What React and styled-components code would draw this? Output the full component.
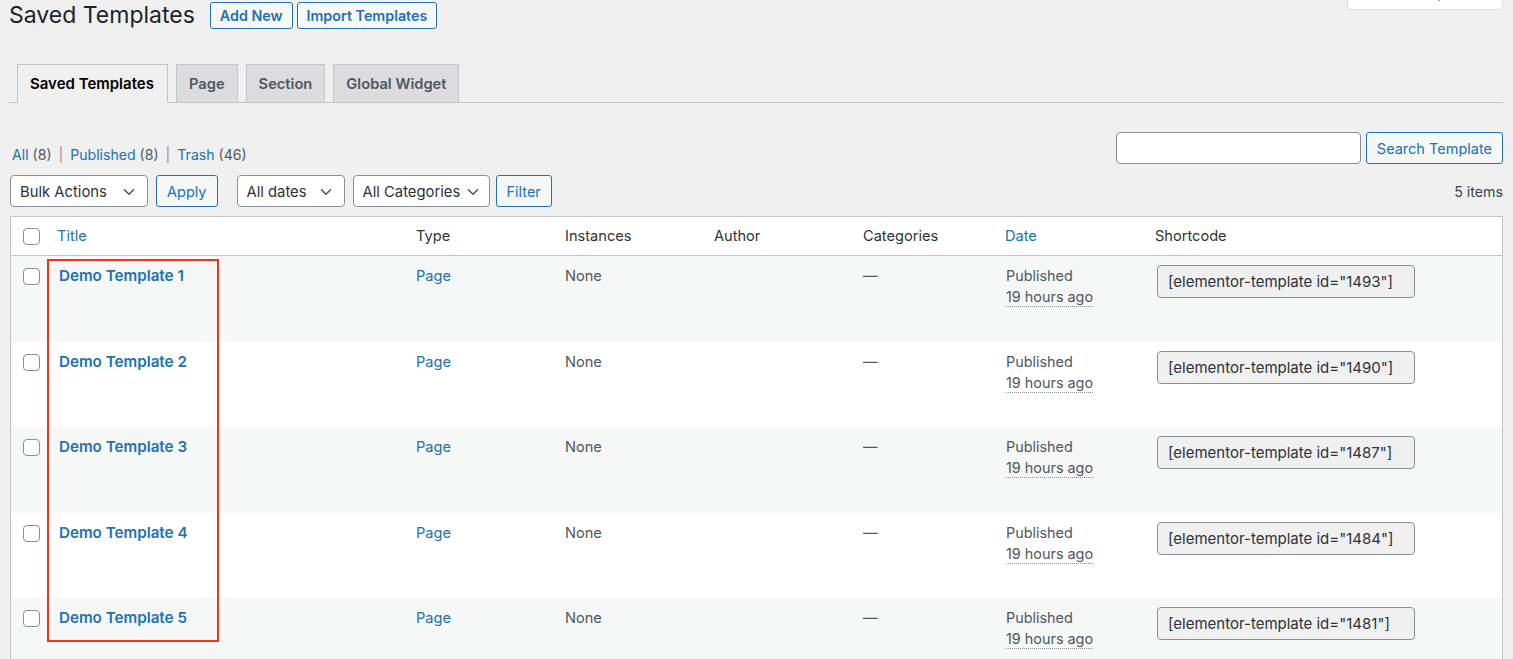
import React from "react";
import styled, { createGlobalStyle } from "styled-components";

const Global = createGlobalStyle`
  html, body { margin: 0; padding: 0; background: #f0f0f1; }
  body { font-family: Inter, "Liberation Sans", Arial, sans-serif; color: #3c434a; font-size: 14.5px; }
  * { box-sizing: border-box; }
`;

const Wrap = styled.div`
  padding: 0 10px 0 9px;
  width: 1513px;
  height: 659px;
  overflow: hidden;
`;

const TopBar = styled.div`
  display: flex;
  align-items: flex-start;
  height: 29px;
`;

const Heading = styled.h1`
  margin: 2px 0 0 0;
  font-size: 23px;
  font-weight: 400;
  line-height: 27px;
  color: #1d2327;
`;

const HeadButtons = styled.div`
  display: flex;
  gap: 4px;
  margin: 2px 0 0 15px;
`;

const PageButton = styled.button`
  height: 27px;
  padding: 0 9px;
  border: 1px solid #2271b1;
  border-radius: 3px;
  background: #f6f7f7;
  color: #2271b1;
  font-family: inherit;
  font-size: 14.3px;
  font-weight: 600;
  cursor: pointer;
`;

const ScreenMeta = styled.div`
  margin-left: auto;
  margin-top: -2px;
  width: 156px;
  height: 12px;
  overflow: hidden;
  background: #fff;
  border: 1px solid #dcdcde;
  border-top: none;
  border-radius: 0 0 4px 4px;
  display: flex;
  justify-content: center;
  align-items: flex-end;
`;

const ScreenMetaText = styled.span`
  font-size: 14px;
  line-height: 14px;
  color: #3c434a;
  transform: translateY(-9px);
  padding-left: 4px;
`;

const Tabs = styled.div`
  display: flex;
  gap: 8px;
  margin-top: 35px;
  padding-left: 8px;
  border-bottom: 1px solid #c3c4c7;
  height: 39px;
`;

const Tab = styled.div`
  height: 39px;
  padding: 0 ${(p) => (p.$active ? "13px" : "12px")} 0 12px;
  display: flex;
  align-items: center;
  border: 1px solid #c3c4c7;
  border-bottom-color: ${(p) => (p.$active ? "#f0f0f1" : "#c3c4c7")};
  background: ${(p) => (p.$active ? "#f0f0f1" : "#dcdcde")};
  color: ${(p) => (p.$active ? "#000" : "#50575e")};
  font-size: ${(p) => (p.$active ? "15px" : "14.7px")};
  font-weight: 600;
  margin-bottom: -1px;
`;

const FilterTop = styled.div`
  display: flex;
  align-items: flex-end;
  justify-content: space-between;
  margin-top: 29px;
`;

const Views = styled.div`
  display: flex;
  align-items: center;
  line-height: 18px;
  padding-left: 3px;
  color: #50575e;
  font-size: 14.1px;
`;

const ViewLink = styled.a`
  color: #2271b1;
  text-decoration: none;
`;

const Sep = styled.span`
  color: #8c8f94;
  margin: 0 7px;
`;

const SearchBox = styled.div`
  display: flex;
  gap: 5px;
`;

const SearchInput = styled.input`
  width: 245px;
  height: 32px;
  border: 1px solid #8c8f94;
  border-radius: 4px;
  background: #fff;
  font-family: inherit;
`;

const ButtonSm = styled.button`
  height: 32px;
  padding: 0 ${(p) => p.$px || 11}px;
  border: 1px solid #2271b1;
  border-radius: 3px;
  background: #f6f7f7;
  color: #2271b1;
  font-family: inherit;
  font-size: 14.5px;
  font-weight: 400;
  cursor: pointer;
`;

const NavRow = styled.div`
  display: flex;
  align-items: center;
  margin-top: 11px;
  padding-left: 1px;
`;

const Group = styled.div`
  display: flex;
  align-items: center;
  gap: ${(p) => p.$gap || 8}px;
  margin-right: ${(p) => p.$mr || 0}px;
`;

const SelectBox = styled.div`
  width: ${(p) => p.$w}px;
  height: 32px;
  border: 1px solid #8c8f94;
  border-radius: 4px;
  background: #fff;
  display: flex;
  align-items: center;
  justify-content: space-between;
  padding: 1px ${(p) => p.$pr || 12}px 0 9px;
  color: #2c3338;
  font-size: 14.8px;
  white-space: nowrap;
`;

const Count = styled.div`
  margin-left: auto;
  color: #3c434a;
  font-size: 14.2px;
`;

const TableWrap = styled.div`
  position: relative;
  margin-top: 9px;
  margin-left: 1px;
  border: 1px solid #c3c4c7;
  background: #fff;
`;

const Row = styled.div`
  display: grid;
  grid-template-columns: 36px 359px 149px 149px 149px 142px 150px 1fr;
  height: ${(p) => (p.$head ? "39px" : "85.5px")};
  background: ${(p) => (p.$head ? "#fff" : p.$alt ? "#f6f7f7" : "#fff")};
  border-bottom: ${(p) => (p.$head ? "1px solid #c3c4c7" : "none")};
  align-items: ${(p) => (p.$head ? "center" : "start")};
`;

const Cell = styled.div`
  padding: ${(p) => (p.$head ? "0" : "10px")} 10px 0 ${(p) => (p.$bold ? 12 : 10)}px;
  color: ${(p) => (p.$link ? "#2271b1" : p.$head ? "#2c3338" : "#50575e")};
  font-size: ${(p) => (p.$bold ? "15.2px" : "14.6px")};
  line-height: 20px;
  font-weight: ${(p) => (p.$bold ? 600 : 400)};
`;

const DateCell = styled.div`
  padding: 9px 10px 0 11px;
  color: #50575e;
  font-size: 14.4px;
  line-height: 21px;
`;

const Abbr = styled.span`
  display: inline-block;
  border-bottom: 1px dotted #8c8f94;
  line-height: 18px;
`;

const CheckCell = styled.div`
  padding: ${(p) => (p.$head ? "0" : "12px")} 0 0 12px;
  display: flex;
`;

const Check = styled.span`
  display: inline-block;
  width: 17px;
  height: 17px;
  border: 1px solid #8c8f94;
  border-radius: 4px;
  background: #fff;
`;

const ShortcodeCell = styled.div`
  padding: 9px 0 0 12px;
`;

const Shortcode = styled.div`
  width: 258px;
  height: 33px;
  border: 1px solid #8c8f94;
  border-radius: 4px;
  background: #f0f0f1;
  color: #2c3338;
  font-size: 15px;
  display: flex;
  align-items: center;
  padding-left: 10px;
  white-space: nowrap;
`;

const Highlight = styled.div`
  position: absolute;
  left: 36px;
  top: 42px;
  width: 172px;
  height: 383px;
  border: 2px solid #f0341c;
  pointer-events: none;
`;

const Chevron = () => (
  <svg width="12" height="8" viewBox="0 0 12 8" aria-hidden="true">
    <path d="M1.5 1.8 L6 6.2 L10.5 1.8" fill="none" stroke="#50575e" strokeWidth="1.6" strokeLinecap="round" strokeLinejoin="round" />
  </svg>
);

const rows = [
  { n: 1, id: "1493" },
  { n: 2, id: "1490" },
  { n: 3, id: "1487" },
  { n: 4, id: "1484" },
  { n: 5, id: "1481" },
];

export default function App() {
  return (
    <>
      <Global />
      <Wrap>
        <TopBar>
          <Heading>Saved Templates</Heading>
          <HeadButtons>
            <PageButton>Add New</PageButton>
            <PageButton>Import Templates</PageButton>
          </HeadButtons>
          <ScreenMeta>
            <ScreenMetaText>Screen Options</ScreenMetaText>
          </ScreenMeta>
        </TopBar>

        <Tabs>
          <Tab $active>Saved Templates</Tab>
          <Tab>Page</Tab>
          <Tab>Section</Tab>
          <Tab>Global Widget</Tab>
        </Tabs>

        <FilterTop>
          <Views>
            <ViewLink>All</ViewLink>&nbsp;(8)
            <Sep>|</Sep>
            <ViewLink>Published</ViewLink>&nbsp;(8)
            <Sep>|</Sep>
            <ViewLink>Trash</ViewLink>&nbsp;(46)
          </Views>
          <SearchBox>
            <SearchInput />
            <ButtonSm $px={10}>Search Template</ButtonSm>
          </SearchBox>
        </FilterTop>

        <NavRow>
          <Group $mr={19}>
            <SelectBox $w={138}>
              Bulk Actions <Chevron />
            </SelectBox>
            <ButtonSm $px={10}>Apply</ButtonSm>
          </Group>
          <Group $gap={8}>
            <SelectBox $w={108}>
              All dates <Chevron />
            </SelectBox>
            <SelectBox $w={137} $pr={10}>
              All Categories <Chevron />
            </SelectBox>
          </Group>
          <Group $gap={6}>
            <span />
            <ButtonSm $px={10}>Filter</ButtonSm>
          </Group>
          <Count>5 items</Count>
        </NavRow>

        <TableWrap>
          <Row $head>
            <CheckCell $head>
              <Check />
            </CheckCell>
            <Cell $head $link>Title</Cell>
            <Cell $head>Type</Cell>
            <Cell $head>Instances</Cell>
            <Cell $head>Author</Cell>
            <Cell $head>Categories</Cell>
            <Cell $head $link>Date</Cell>
            <Cell $head>Shortcode</Cell>
          </Row>
          {rows.map((r, i) => (
            <Row key={r.n} $alt={i % 2 === 0}>
              <CheckCell>
                <Check />
              </CheckCell>
              <Cell $link $bold>
                Demo Template {r.n}
              </Cell>
              <Cell $link>Page</Cell>
              <Cell>None</Cell>
              <Cell />
              <Cell>—</Cell>
              <DateCell>
                Published
                <br />
                <Abbr>19 hours ago</Abbr>
              </DateCell>
              <ShortcodeCell>
                <Shortcode>[elementor-template id="{r.id}"]</Shortcode>
              </ShortcodeCell>
            </Row>
          ))}
          <Highlight />
        </TableWrap>
      </Wrap>
    </>
  );
}
